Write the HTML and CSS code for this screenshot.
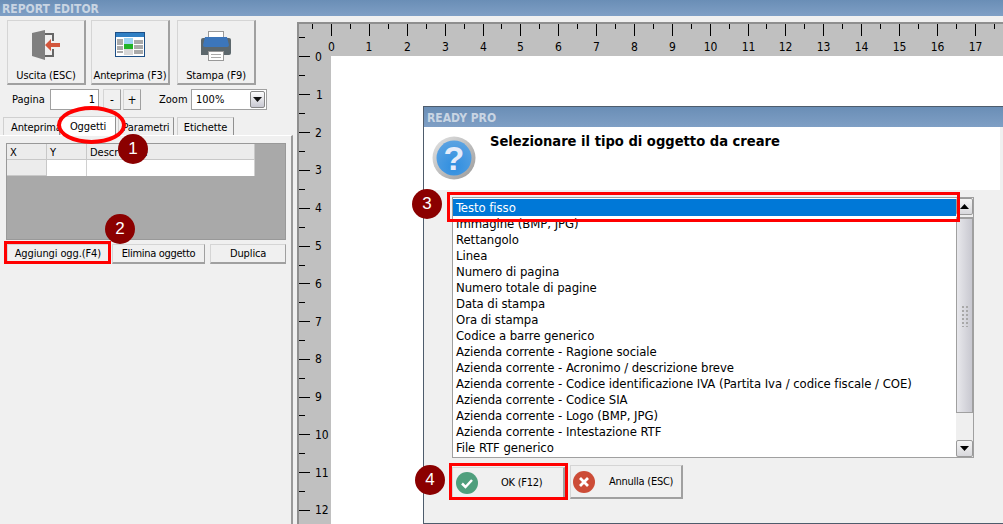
FILE: index.html
```html
<!DOCTYPE html>
<html lang="it">
<head>
<meta charset="utf-8">
<title>Report Editor</title>
<link rel="stylesheet" href="styles.css">
</head>
<body>
<div class="app">
  <header class="titlebar">REPORT EDITOR</header>
  <main class="main">
    <aside class="side">
      <div class="toolbar">
        <button class="tool">
          <svg class="tool-icon" width="32" height="32" viewBox="0 0 32 32">
            <path d="M15 5H23V12M23 20V27H15" fill="none" stroke="#666" stroke-width="2"/>
            <path d="M2 4L15 1V31L2 27Z" fill="#808080"/>
            <path d="M15 16L21 10V14H30V18H21V22Z" fill="#d3563c"/>
          </svg>
          <span>Uscita (ESC)</span>
        </button>
        <button class="tool">
          <svg class="tool-icon" width="32" height="32" viewBox="0 0 32 32">
            <rect x="1.500" y="3.500" width="29" height="24" fill="#fff" stroke="#1d4f86"/>
            <rect x="2" y="4" width="28" height="4" fill="#2f7fc4"/>
            <rect x="10" y="9" width="9" height="6" fill="#9fd4f2"/>
            <rect x="10" y="15" width="9" height="5" fill="#22b327"/>
            <rect x="10" y="20" width="9" height="6" fill="#d8d8d8"/>
            <path d="M3 11H9M3 13H9M3 15H9M3 18H9M3 20H9M3 23H9M20 12H29M20 14H29M20 17H29M20 19H29M20 22H29M20 24H29" stroke="#555"/>
          </svg>
          <span>Anteprima (F3)</span>
        </button>
        <button class="tool tool-far">
          <svg class="tool-icon" width="32" height="32" viewBox="0 0 32 32">
            <rect x="8.500" y="2.500" width="15" height="8" fill="#fff" stroke="#999"/>
            <path d="M1 11Q1 9 3 9H29Q31 9 31 11V24Q31 26 29 26H1Z" fill="#5c676c"/>
            <path d="M5 8H27L29 16Q29 18 27 18H5Q3 18 3 16Z" fill="#3c76bb"/>
            <rect x="8.500" y="22.500" width="15" height="9" fill="#fff" stroke="#999"/>
            <path d="M11 25.500H21M11 28.500H21" stroke="#aaa"/>
          </svg>
          <span>Stampa (F9)</span>
        </button>
      </div>
      <div class="pager">
        <label class="pager-label">Pagina</label>
        <div class="field field-page">1</div>
        <button class="mini mini-minus">-</button>
        <button class="mini">+</button>
        <label class="zoom-label">Zoom</label>
        <div class="field field-zoom">100%<span class="drop"><svg width="9" height="5" viewBox="0 0 9 5"><path d="M0 0H9L4.500 5Z" fill="#111"/></svg></span></div>
      </div>
      <nav class="tabs">
        <span class="tab tab-a">Anteprima</span>
        <span class="tab tab-active">Oggetti</span>
        <span class="tab tab-p">Parametri</span>
        <span class="tab tab-e">Etichette</span>
      </nav>
      <section class="panel">
        <div class="grid-box">
          <div class="grid">
            <div class="gh">X</div><div class="gh">Y</div><div class="gh">Descrizione</div>
            <div class="gh"></div><div class="gc"></div><div class="gc"></div>
          </div>
        </div>
        <div class="actions">
          <button class="act act-add">Aggiungi ogg.(F4)</button>
          <button class="act act-del">Elimina oggetto</button>
          <button class="act act-dup">Duplica</button>
        </div>
      </section>
    </aside>
    <section class="work">
      <svg class="rulers" width="704" height="500" viewBox="299 24 704 500">
        <path d="M312 23V29M331 23V36M350 23V29M369 23V36M388 23V29M407 23V36M426 23V29M445 23V36M464 23V29M483 23V36M501 23V29M520 23V36M539 23V29M558 23V36M577 23V29M596 23V36M615 23V29M634 23V36M653 23V29M672 23V36M691 23V29M710 23V36M729 23V29M748 23V36M766 23V29M785 23V36M804 23V29M823 23V36M842 23V29M861 23V36M880 23V29M899 23V36M918 23V29M937 23V36M956 23V29M975 23V36M994 23V29" stroke="#000" fill="none" transform="translate(.5 0)"/>
        <path d="M298 37H305M298 56H310M298 75H305M298 94H310M298 113H305M298 132H310M298 151H305M298 170H310M298 189H305M298 208H310M298 227H305M298 246H310M298 265H305M298 283H310M298 302H305M298 321H310M298 340H305M298 359H310M298 378H305M298 397H310M298 415H305M298 434H310M298 453H305M298 472H310M298 491H305M298 510H310" stroke="#000" fill="none" transform="translate(0 .5)"/>
        <g class="rl" text-anchor="middle">
          <text x="331.500" y="51">0</text><text x="369" y="51">1</text><text x="407.500" y="51">2</text><text x="445.500" y="51">3</text><text x="483.500" y="51">4</text><text x="520.500" y="51">5</text><text x="558.500" y="51">6</text><text x="596.500" y="51">7</text><text x="634.500" y="51">8</text><text x="672.500" y="51">9</text><text x="710.500" y="51">10</text><text x="748.500" y="51">11</text><text x="785.500" y="51">12</text><text x="823.500" y="51">13</text><text x="861.500" y="51">14</text><text x="899.500" y="51">15</text><text x="937.500" y="51">16</text><text x="975.500" y="51">17</text>
        </g>
        <g class="rl">
          <text x="315" y="61">0</text><text x="316" y="99">1</text><text x="315" y="137">2</text><text x="315" y="174">3</text><text x="315" y="212">4</text><text x="315" y="250">5</text><text x="315" y="288">6</text><text x="315" y="326">7</text><text x="315" y="363">8</text><text x="315" y="401">9</text><text x="315" y="439">10</text><text x="315" y="477">11</text><text x="315" y="514">12</text>
        </g>
      </svg>
      <div class="page"></div>
    </section>
  </main>

  <div class="dialog">
    <div class="dlg-title">READY PRO</div>
    <div class="dlg-head">
      <svg class="help" width="44" height="44" viewBox="0 0 44 44">
        <defs>
          <linearGradient id="ring" x1="0" y1="0" x2="1" y2="1"><stop offset="0" stop-color="#e4e4e4"/><stop offset="1" stop-color="#9a9a9a"/></linearGradient>
          <radialGradient id="ball" cx=".5" cy=".75" r=".8"><stop offset="0" stop-color="#2f8ee0"/><stop offset="1" stop-color="#5ea4e2"/></radialGradient>
        </defs>
        <circle cx="22" cy="22" r="21.500" fill="url(#ring)"/>
        <circle cx="22" cy="22" r="17.500" fill="url(#ball)"/>
        <text class="help-q" x="22" y="34" text-anchor="middle">?</text>
      </svg>
      <h1 class="dlg-heading">Selezionare il tipo di oggetto da creare</h1>
    </div>
    <div class="dlg-body">
      <div class="list">
        <ul class="items">
          <li class="sel">Testo fisso</li>
          <li>Immagine (BMP, JPG)</li>
          <li>Rettangolo</li>
          <li>Linea</li>
          <li>Numero di pagina</li>
          <li>Numero totale di pagine</li>
          <li>Data di stampa</li>
          <li>Ora di stampa</li>
          <li>Codice a barre generico</li>
          <li>Azienda corrente - Ragione sociale</li>
          <li>Azienda corrente - Acronimo / descrizione breve</li>
          <li>Azienda corrente - Codice identificazione IVA (Partita Iva / codice fiscale / COE)</li>
          <li>Azienda corrente - Codice SIA</li>
          <li>Azienda corrente - Logo (BMP, JPG)</li>
          <li>Azienda corrente - Intestazione RTF</li>
          <li>File RTF generico</li>
        </ul>
        <div class="scroll">
          <span class="sb-btn"><svg width="9" height="5" viewBox="0 0 9 5"><path d="M0 5H9L4.500 0Z" fill="#000"/></svg></span>
          <span class="sb-thumb"><span class="grip"></span></span>
          <span class="sb-track"></span>
          <span class="sb-btn"><svg width="9" height="5" viewBox="0 0 9 5"><path d="M0 0H9L4.500 5Z" fill="#000"/></svg></span>
        </div>
      </div>
      <div class="dlg-actions">
        <button class="dbtn dbtn-ok">
          <svg width="22" height="22" viewBox="0 0 22 22"><circle cx="11" cy="11" r="11" fill="#4f9f7d"/><path d="M6 11.500L9.500 15L16 8" fill="none" stroke="#fff" stroke-width="2.500"/></svg>
          <span>OK (F12)</span>
        </button>
        <button class="dbtn dbtn-no">
          <svg width="22" height="22" viewBox="0 0 22 22"><circle cx="11" cy="11" r="11" fill="#cc4c37"/><path d="M7 7L15 15M15 7L7 15" fill="none" stroke="#fff" stroke-width="2.800"/></svg>
          <span>Annulla (ESC)</span>
        </button>
      </div>
    </div>
  </div>

  <div class="ellipse"></div>
  <div class="mark mark-add"></div>
  <div class="mark mark-list"></div>
  <div class="mark mark-ok"></div>
  <div class="badge badge-1">1</div>
  <div class="badge badge-2">2</div>
  <div class="badge badge-3">3</div>
  <div class="badge badge-4">4</div>
</div>
</body>
</html>
```
FILE: styles.css
```css
* { box-sizing: border-box; }
html, body { margin: 0; padding: 0; height: 100%; overflow: hidden; }
body { background: #f0f0f0; color: #000; font-family: "DejaVu Sans", Tahoma, sans-serif; font-stretch: condensed; font-size: 11px; line-height: 16px; }
button { font: inherit; font-stretch: condensed; color: inherit; padding: 0; margin: 0; letter-spacing: -.12px; }
.app { position: relative; width: 1003px; height: 524px; display: flex; flex-direction: column; overflow: hidden; }

.titlebar { height: 16px; flex: none; background: linear-gradient(#6a8eb6, #7f9fc5); color: #c9d5e3; font-weight: 700; font-size: 12px; line-height: 18px; padding-left: 2px; }

.main { flex: 1; display: flex; min-height: 0; }
.side { width: 293px; flex: none; margin-right: 4px; display: flex; flex-direction: column; }

.toolbar { display: flex; gap: 5px; padding: 4px 0 0 7px; }
.tool { width: 79px; height: 65px; background: #f0f0f0; border: 1px solid #d5d5d5; border-right: 2px solid #a0a0a0; border-bottom: 2px solid #a0a0a0; display: flex; flex-direction: column; align-items: center; padding-top: 8px; }
.tool-far { margin-left: 2px; }
.tool-icon { flex: none; }
.tool span { margin-top: 7px; white-space: nowrap; }

.pager { display: flex; align-items: center; height: 21px; margin-top: 4px; padding-left: 12px; }
.pager-label { width: 38px; }
.field { height: 21px; background: #fff; border: 1px solid #a0a0a0; line-height: 19px; }
.field-page { width: 49px; text-align: right; padding-right: 3px; }
.mini { width: 18px; height: 21px; background: #f0f0f0; border: 1px solid #d5d5d5; border-right-color: #a0a0a0; border-bottom-color: #a0a0a0; font-size: 12px; margin-left: 2px; }
.mini-minus { margin-left: 4px; }
.zoom-label { margin-left: 18px; width: 32px; }
.field-zoom { width: 76px; padding-left: 4px; display: flex; align-items: center; justify-content: space-between; padding-right: 1px; }
.drop { width: 15px; height: 17px; border: 1px solid #888; border-radius: 2px; background: linear-gradient(#fdfdfd, #c9c9d2); display: flex; align-items: center; justify-content: center; }

.tabs { display: flex; height: 19px; margin-top: 6px; padding-left: 3px; align-items: flex-end; letter-spacing: -.12px; }
.tab { height: 18px; line-height: 20px; text-align: center; border: 1px solid #d0d0d0; border-bottom: 0; border-right: 1px solid #909090; background: #f0f0f0; white-space: nowrap; overflow: hidden; }
.tab-a { width: 57px; text-align: left; padding-left: 7px; }
.tab-active { width: 56px; height: 19px; background: #fff; line-height: 20px; }
.tab-p { width: 56px; margin-left: 2px; }
.tab-e { width: 57px; margin-left: 3px; }

.panel { flex: 1; width: 293px; background: #f0f0f0; border-top: 1px solid #fff; border-right: 2px solid #9a9a9a; padding: 7px 5px 0 6px; position: relative; }
.grid-box { height: 97px; background: #a9a9a9; border: 1px solid #999; }
.grid { display: grid; grid-template-columns: 40px 40px 168px; grid-template-rows: 16px 16px; width: 248px; }
.gh { background: #ececec; border-right: 1px solid #c8c8c8; border-bottom: 1px solid #c8c8c8; line-height: 17px; padding-left: 3px; white-space: nowrap; overflow: hidden; }
.gc { background: #fff; border-right: 1px solid #d0d0d0; }

.actions { display: flex; margin-top: 4px; margin-left: 1px; gap: 3px; }
.act { height: 20px; background: #f0f0f0; border: 1px solid #d5d5d5; border-right-color: #a0a0a0; border-bottom: 2px solid #a0a0a0; white-space: nowrap; }
.act-add { width: 102px; }
.act-del { width: 94px; letter-spacing: -.3px; }
.act-dup { width: 76px; margin-left: 2px; }

.work { flex: 1; display: grid; grid-template-columns: 1fr; grid-template-rows: 1fr; margin-top: 6px; background: #c0c0c0; border-top: 2px solid #8f8f8f; border-left: 2px solid #8f8f8f; min-width: 0; overflow: hidden; }
.rulers { display: block; grid-area: 1 / 1; }
.rl text { font-family: "DejaVu Sans", sans-serif; font-stretch: condensed; font-size: 12px; fill: #000; }
.page { background: #fff; grid-area: 1 / 1; margin: 32px 0 0 32px; }

.dialog { position: absolute; left: 423px; top: 106px; width: 590px; height: 418px; background: #f0f0f0; border: 1px solid #4e5c6c; display: flex; flex-direction: column; }
.dlg-title { height: 20px; flex: none; background: linear-gradient(#6a8eb6, #7f9fc5); color: #c9d5e3; font-size: 12px; font-weight: 700; line-height: 23px; padding-left: 3px; }
.dlg-head { height: 63px; flex: none; width: 576px; background: #fff; position: relative; display: flex; }
.help { margin: 9px 0 0 8px; flex: none; }
.help-q { font: 700 34px "Liberation Sans", Arial, sans-serif; fill: #e6ecfa; }
.dlg-heading { margin: 5px 0 0 14px; font-size: 14.600px; line-height: 18px; font-weight: 700; white-space: nowrap; }
.dlg-body { flex: 1; padding: 7px 0 0 28px; }

.list { width: 522px; height: 261px; background: #fff; border: 1px solid #a0a0a0; display: flex; overflow: hidden; font-size: 13px; letter-spacing: -.06px; }
.items { list-style: none; margin: 0; padding: 1px 0 0 0; flex: 1; min-width: 0; }
.items li { height: 16px; line-height: 16px; padding-left: 3px; white-space: nowrap; }
.items .sel { background: #0078d7; color: #fff; height: 17px; line-height: 18px; }
.scroll { width: 17px; flex: none; display: flex; flex-direction: column; background: #efefef; }
.sb-btn { height: 17px; flex: none; background: linear-gradient(#f4f4f4, #d8d8dc); border: 1px solid #9a9a9a; border-radius: 2px; display: flex; align-items: center; justify-content: center; }
.sb-thumb { height: 196px; margin-top: 2px; background: linear-gradient(90deg, #e8e8ec, #c8c8d0); border: 1px solid #a0a0a0; border-top-width: 2px; display: flex; align-items: center; justify-content: center; }
.grip { width: 7px; height: 22px; background-image: radial-gradient(#a8a8a8 1px, transparent 1px); background-size: 4px 4px; }
.sb-track { flex: 1; }

.dlg-actions { display: flex; gap: 5px; margin-top: 9px; }
.dbtn { width: 113px; height: 32px; background: #f0f0f0; border: 1px solid #d5d5d5; border-right: 2px solid #a0a0a0; border-bottom: 2px solid #a0a0a0; display: flex; align-items: center; padding-left: 3px; white-space: nowrap; letter-spacing: -.25px; }
.dbtn svg { flex: none; }
.dbtn-ok span { margin-left: 23px; }
.dbtn-no { height: 34px; margin-top: -2px; padding-left: 2px; }
.dbtn-no span { margin-left: 14px; }

.ellipse { position: absolute; left: 57px; top: 106px; width: 69px; height: 38px; border: 4px solid #f00; border-radius: 50%; }
.mark { position: absolute; border: 3px solid #f00; }
.mark-add { left: 4px; top: 241px; width: 107px; height: 23px; }
.mark-list { left: 447px; top: 192px; width: 513px; height: 30px; }
.mark-ok { left: 449px; top: 463px; width: 119px; height: 37px; }
.badge { position: absolute; width: 30px; height: 30px; border-radius: 50%; background: #8b0000; color: #fff; font-size: 17px; line-height: 30px; text-align: center; font-family: "Liberation Sans", sans-serif; }
.badge-1 { left: 118px; top: 134px; }
.badge-2 { left: 105px; top: 214px; }
.badge-3 { left: 412px; top: 189px; }
.badge-4 { left: 415px; top: 465px; }
```
